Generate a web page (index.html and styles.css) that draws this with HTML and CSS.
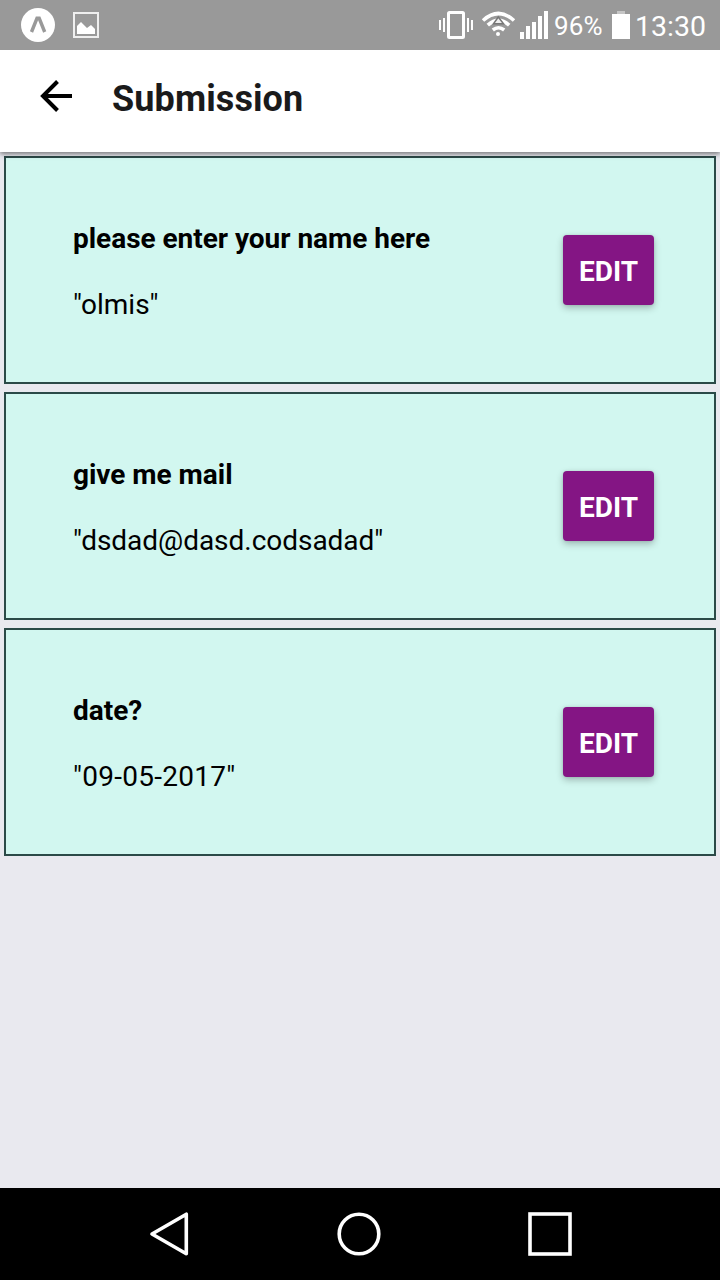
FILE: index.html
```html
<!DOCTYPE html>
<html lang="en">
<head>
<meta charset="utf-8">
<title>Submission</title>
<link rel="stylesheet" href="styles.css">
</head>
<body>
<div class="screen">
  <div class="status">
    <svg class="notifications" width="120" height="50" viewBox="0 0 120 50">
      <circle cx="38" cy="25" r="17" fill="#fff"/>
      <path d="M31.500 32 37 18.300h2.200L44.700 32" fill="none" stroke="#999" stroke-width="3.400"/>
      <rect x="74" y="13" width="24" height="24" fill="none" stroke="#efefef" stroke-width="2"/>
      <path d="M77 34v-8l4-4 6 6 4-3 4 4v5z" fill="#fff"/>
    </svg>
    <div class="indicators">
      <svg width="120" height="50" viewBox="430 0 120 50">
        <rect x="448.500" y="12.500" width="15" height="25" rx="1" fill="none" stroke="#fff" stroke-width="3"/>
        <path d="M440 20v10M444 18v14M468 18v14M472 20v10" stroke="#fff" stroke-width="2"/>
        <g fill="none" stroke="#fff" stroke-width="3.600">
          <path d="M483 20.500Q498.500 6.500 514 20.500"/>
          <path d="M487.800 25.200Q498.500 15.500 509.200 25.200"/>
          <path d="M492.800 30Q498.500 25.500 504.200 30"/>
        </g>
        <circle cx="498" cy="34" r="2" fill="#fff"/>
        <path d="M498.300 17 493.500 23.800H503.500z" fill="#eee" stroke="#777" stroke-width="1.500"/>
        <path d="M520 32h4v7h-4zM526 26h4v13h-4zM532 22h4v17h-4zM538 16h4v23h-4zM544 11h4v28h-4z" fill="#fff"/>
      </svg>
      <span class="percent">96%</span>
      <svg class="battery" width="18" height="50" viewBox="0 0 18 50">
        <path d="M5 11h8v3H5z" fill="#c5c5c5"/>
        <path d="M0 14h18v25H0z" fill="#fff"/>
      </svg>
      <span class="clock">13:30</span>
    </div>
  </div>
  <header class="header">
    <svg class="back" width="32" height="32" viewBox="0 0 32 32">
      <path d="M17.500 1.500 3 16l14.500 14.500M3 16h29" fill="none" stroke="#000" stroke-width="4"/>
    </svg>
    <h1 class="title">Submission</h1>
  </header>
  <main class="list">
    <section class="card">
      <div class="entry"><p class="question">please enter your name here</p><p class="answer">"olmis"</p></div>
      <button class="edit">EDIT</button>
    </section>
    <section class="card">
      <div class="entry"><p class="question">give me mail</p><p class="answer">"dsdad@dasd.codsadad"</p></div>
      <button class="edit">EDIT</button>
    </section>
    <section class="card">
      <div class="entry"><p class="question">date?</p><p class="answer date">"09-05-2017"</p></div>
      <button class="edit">EDIT</button>
    </section>
  </main>
  <nav class="navbar">
    <svg width="720" height="92" viewBox="0 0 720 92" fill="none" stroke="#fff" stroke-width="3.600" stroke-linejoin="round">
      <path d="M152 46 186.300 26.200v39.600z"/>
      <circle cx="359" cy="46" r="19.800"/>
      <rect x="530" y="26" width="40" height="40" stroke-linejoin="miter"/>
    </svg>
  </nav>
</div>
</body>
</html>
```
FILE: styles.css
```css
* { box-sizing: border-box; }
body { margin: 0; font-family: Roboto, "Liberation Sans", sans-serif; }
.screen { display: flex; flex-direction: column; width: 720px; height: 1280px; overflow: hidden; background: #e9e9ef; }
.status { position: relative; z-index: 2; display: flex; justify-content: space-between; height: 50px; flex: none; background: #999; color: #fff; }
.status svg { display: block; flex: none; }
.indicators { display: flex; width: 290px; }
.percent { width: 58px; padding-left: 4px; font-size: 26px; line-height: 52px; letter-spacing: .2px; white-space: nowrap; }
.battery { margin-left: 4px; }
.clock { padding-left: 5px; font-size: 28.5px; line-height: 53px; }
.header { position: relative; z-index: 1; display: flex; align-items: center; gap: 40px; flex: none; height: 102px; padding: 0 40px 10px; background: #fff; box-shadow: 0 2px 5px rgba(0, 0, 0, .5); }
.title { margin: 6px 0 0; color: #1a1a1b; font-size: 36px; line-height: 42px; font-weight: 700; letter-spacing: .1px; }
.list { display: flex; flex-direction: column; gap: 8px; flex: 1; padding: 4px; }
.card { display: flex; align-items: center; justify-content: space-between; height: 228px; padding: 0 60px 0 67px; border: 2px solid #2b4a48; background: #d2f7f0; }
.entry { height: 96px; color: #000; font-size: 28px; line-height: 33px; }
.entry p { margin: 0; }
.entry .question { margin-bottom: 33px; font-weight: 700; letter-spacing: -.03px; }
.entry .answer { letter-spacing: -.03px; }
.entry .date { letter-spacing: .26px; }
.edit { width: 91px; height: 70px; padding: 2px 0 0; border: 0; border-radius: 4px; background: #841584; color: #fff; font: 700 28px Roboto, "Liberation Sans", sans-serif; box-shadow: 0 3px 7px rgba(0, 0, 0, .25), 0 0 3px rgba(0, 0, 0, .1); }
.navbar { height: 92px; flex: none; background: #000; }
.navbar svg { display: block; }
```
